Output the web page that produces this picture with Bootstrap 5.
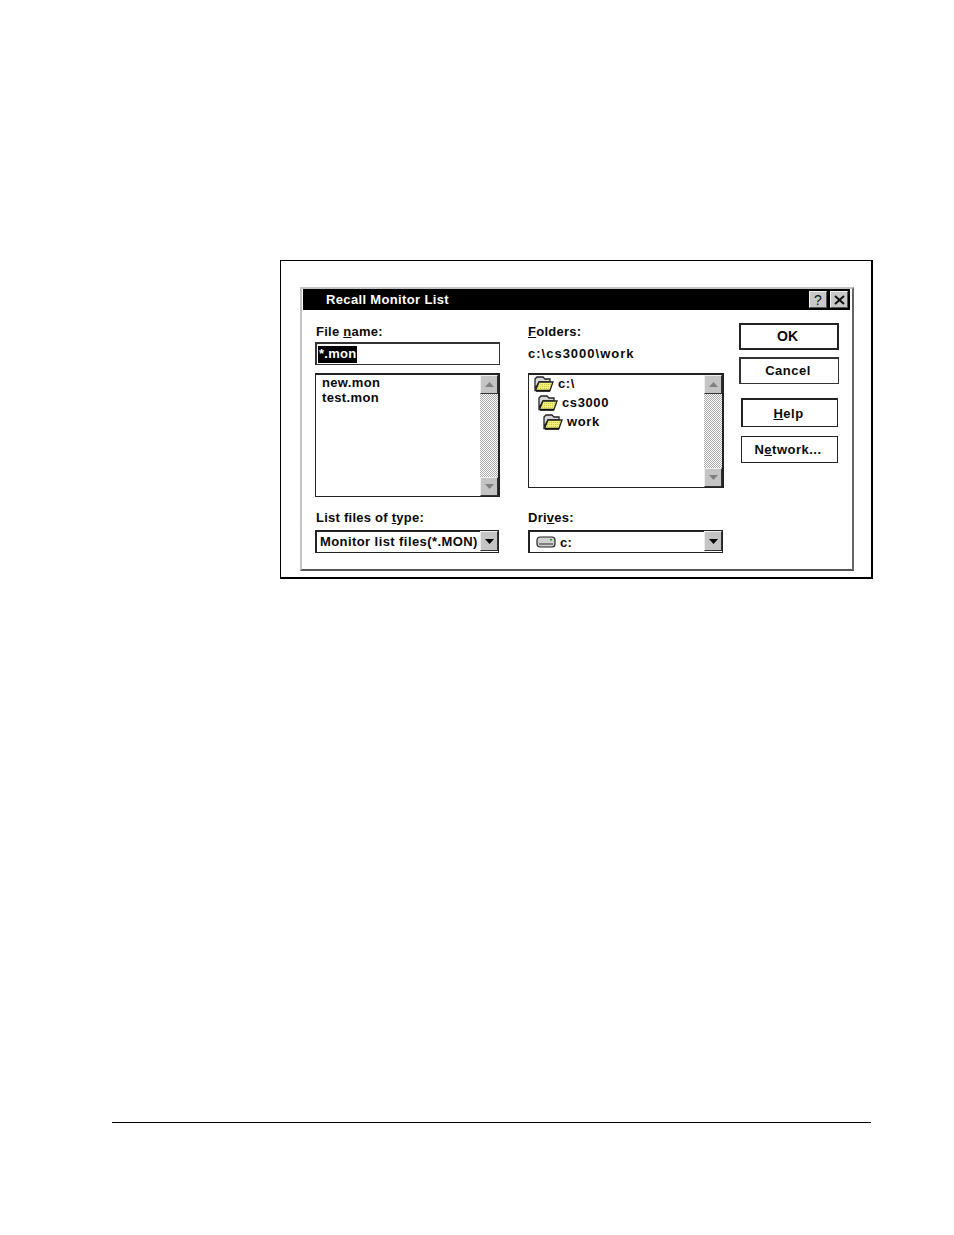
<!DOCTYPE html>
<html lang="en"><head><meta charset="utf-8"><title>Recall Monitor List</title>
<link href="https://cdn.jsdelivr.net/npm/bootstrap@5.3.0/dist/css/bootstrap.min.css" rel="stylesheet">
<style>
html,body{background:#fff;margin:0}
body{width:954px;height:1235px;font-family:"Liberation Sans",Arial,sans-serif;font-weight:700;font-size:13px;line-height:15px;letter-spacing:.25px;color:#0a0a0a;overflow:hidden}
.sheet{padding:260px 81px 0 280px;height:1122px}
.frame{width:593px;height:319px;border:1px solid #000;border-right-width:2px;border-bottom-width:2px;padding:26px 18px 6px 19px}
.dlg{width:554px;height:284px;border:2px solid #c4c4c4;border-right:2px solid #666;border-bottom:2px solid #555;background:#fff}
.ttl{height:21px;background:#000;color:#fff;padding:0 2px 0 23px;margin:0 2px 0 1px;letter-spacing:.35px}
.caps{gap:3px}
.cap{width:18px;height:17px;background:#c8c8c8;color:#111;border:1px solid;border-color:#f0f0f0 #555 #555 #f0f0f0;font-size:14px;line-height:14px;padding:0}
.body-area{padding:12px 0 0 14px;gap:28px}
.col-l{width:184px}.col-r{width:196px}.col-b{width:100px;margin-left:-13px;padding-top:1px}
.lbl{height:17px;line-height:19px}
.fld{height:23px;margin:3px 0 0 -1px;border:2px solid #333;border-right-width:1px;border-bottom-width:1px;padding:1px 0 0 1px;line-height:17px}
.sel{background:#000;color:#fff;padding:0 1px;display:inline-block;line-height:15px;height:17px}
.pth{height:23px;margin-top:3px;line-height:23px;letter-spacing:1px}
.lst{margin-top:8px;border:1px solid #222;border-top-width:2px;background:#fff}
.lst-a{height:124px;margin-left:-1px}.lst-b{height:115px}
.items{padding:0 0 0 6px;line-height:15px;letter-spacing:.35px}
.sb{width:19px;border-right:1px solid #222;background-color:#fff;background-image:conic-gradient(#aaa 25%,#fff 0 50%,#aaa 0 75%,#fff 0);background-size:2px 2px}
.sbb{width:18px;height:19px;background:#c4c4c4;border:1px solid;border-color:#eee #333 #333 #eee}
.tree-row{height:19px;line-height:19px;gap:4px;letter-spacing:.6px}
.in1{padding-left:4px}.in2{padding-left:9px}
.tree{padding:0 0 0 5px;margin-top:-1px}
.combo{height:23px;margin:3px 1px 0 0;border:2px solid #222;border-right-width:1px;border-bottom-width:1px;padding-left:2px;line-height:19px;background:#fff}
.combo-l{margin-left:-1px}
.mon-t{letter-spacing:.42px;padding-left:1px;white-space:nowrap}
.drop{width:18px;height:20px;background:#c4c4c4;border:1px solid;border-color:#eee #333 #333 #eee;margin-top:-1px;flex:none}
.wbtn{display:block;width:100%;background:#fff;color:#0a0a0a;border:1px solid #222;border-radius:0;font:inherit;padding:0 3px 0 0;text-align:center;box-shadow:none;letter-spacing:.5px}
.wbtn:hover{background:#fff;color:#0a0a0a;border-color:#222}
.b-ok{height:27px;border-width:2px;line-height:21px;font-size:14px;letter-spacing:0}
.b-can{height:27px;margin-top:7px;border-width:2px 1px 1px 2px;border-color:#333;padding-bottom:2px}
.b-hlp{height:29px;margin-top:14px;margin-left:2px;width:97px;border-width:2px 1px 1px 2px}
.b-net{height:27px;margin-top:9px;margin-left:2px;width:97px;padding-bottom:1px}
.gap-lab{margin-top:13px;line-height:16px}
.gap-lab2{margin-top:22px;line-height:16px}
.rule{margin:0 83px 0 112px;width:759px;height:1px;border-top:1.5px solid #000;opacity:1}
</style></head><body>
<svg width="0" height="0" class="position-absolute"><defs>
<pattern id="dith" width="2" height="2" patternUnits="userSpaceOnUse"><rect width="2" height="2" fill="#f2f27a"/><rect width="1" height="1" fill="#c8c850"/></pattern>
<symbol id="fold" viewBox="0 0 20 16"><path d="M1 3L3 1H9L11 3H16V6H5L1 13Z" fill="#d8d8d8" stroke="#222" stroke-width="1.3"/><path d="M1.5 14.5L5 6H19L16 14.5Z" fill="url(#dith)" stroke="#222" stroke-width="1.3"/><path d="M2 15H16" stroke="#111" stroke-width="1.6"/></symbol>
</defs></svg>
<div class="sheet">
 <div class="frame">
  <div class="dlg d-flex flex-column">
   <div class="ttl d-flex align-items-center justify-content-between">
     <span>Recall Monitor List</span>
     <span class="caps d-flex">
       <button class="cap d-flex align-items-center justify-content-center" type="button">?</button>
       <button class="cap d-flex align-items-center justify-content-center" type="button" aria-label="Close"><svg width="11" height="10" viewBox="0 0 11 10"><path d="M1 1L10 9M10 1L1 9" stroke="#111" stroke-width="2"/></svg></button>
     </span>
   </div>
   <div class="body-area d-flex">
    <div class="col-l">
      <div class="lbl">File <u>n</u>ame:</div>
      <div class="fld"><span class="sel">*.mon</span></div>
      <div class="lst lst-a d-flex">
        <div class="items flex-grow-1">new.mon<br>test.mon</div>
        <div class="sb d-flex flex-column justify-content-between">
          <div class="sbb d-flex align-items-center justify-content-center"><svg width="9" height="5" viewBox="0 0 9 5"><path d="M4.5 0L9 5H0Z" fill="#808080"/></svg></div>
          <div class="sbb d-flex align-items-center justify-content-center"><svg width="9" height="5" viewBox="0 0 9 5"><path d="M0 0H9L4.5 5Z" fill="#808080"/></svg></div>
        </div>
      </div>
      <div class="lbl gap-lab">List files of <u>t</u>ype:</div>
      <div class="combo combo-l d-flex justify-content-between"><span class="mon-t">Monitor list files(*.MON)</span>
        <div class="drop d-flex align-items-center justify-content-center"><svg width="9" height="5" viewBox="0 0 9 5"><path d="M0 0H9L4.5 5Z" fill="#000"/></svg></div>
      </div>
    </div>
    <div class="col-r">
      <div class="lbl"><u>F</u>olders:</div>
      <div class="pth">c:\cs3000\work</div>
      <div class="lst lst-b d-flex">
        <div class="tree flex-grow-1">
          <div class="tree-row d-flex align-items-center"><svg width="20" height="16"><use href="#fold"/></svg><span>c:\</span></div>
          <div class="tree-row d-flex align-items-center in1"><svg width="20" height="16"><use href="#fold"/></svg><span>cs3000</span></div>
          <div class="tree-row d-flex align-items-center in2"><svg width="20" height="16"><use href="#fold"/></svg><span>work</span></div>
        </div>
        <div class="sb d-flex flex-column justify-content-between">
          <div class="sbb d-flex align-items-center justify-content-center"><svg width="9" height="5" viewBox="0 0 9 5"><path d="M4.5 0L9 5H0Z" fill="#808080"/></svg></div>
          <div class="sbb d-flex align-items-center justify-content-center"><svg width="9" height="5" viewBox="0 0 9 5"><path d="M0 0H9L4.5 5Z" fill="#808080"/></svg></div>
        </div>
      </div>
      <div class="lbl gap-lab2">Dri<u>v</u>es:</div>
      <div class="combo d-flex justify-content-between">
        <span class="d-flex align-items-center gap-1" style="padding-left:4px"><svg width="20" height="12" viewBox="0 0 20 12"><rect x="1" y="1" width="18" height="10" rx="3" fill="#d0d0d0" stroke="#222" stroke-width="1.2"/><path d="M3 8H17" stroke="#808080" stroke-width="2"/><rect x="14" y="3" width="2" height="1.4" fill="#0a0"/></svg><span>c:</span></span>
        <div class="drop d-flex align-items-center justify-content-center"><svg width="9" height="5" viewBox="0 0 9 5"><path d="M0 0H9L4.5 5Z" fill="#000"/></svg></div>
      </div>
    </div>
    <div class="col-b">
      <button type="button" class="btn wbtn b-ok">OK</button>
      <button type="button" class="btn wbtn b-can">Cancel</button>
      <button type="button" class="btn wbtn b-hlp"><u>H</u>elp</button>
      <button type="button" class="btn wbtn b-net">N<u>e</u>twork...</button>
    </div>
   </div>
  </div>
 </div>
</div>
<hr class="rule">
</body></html>
